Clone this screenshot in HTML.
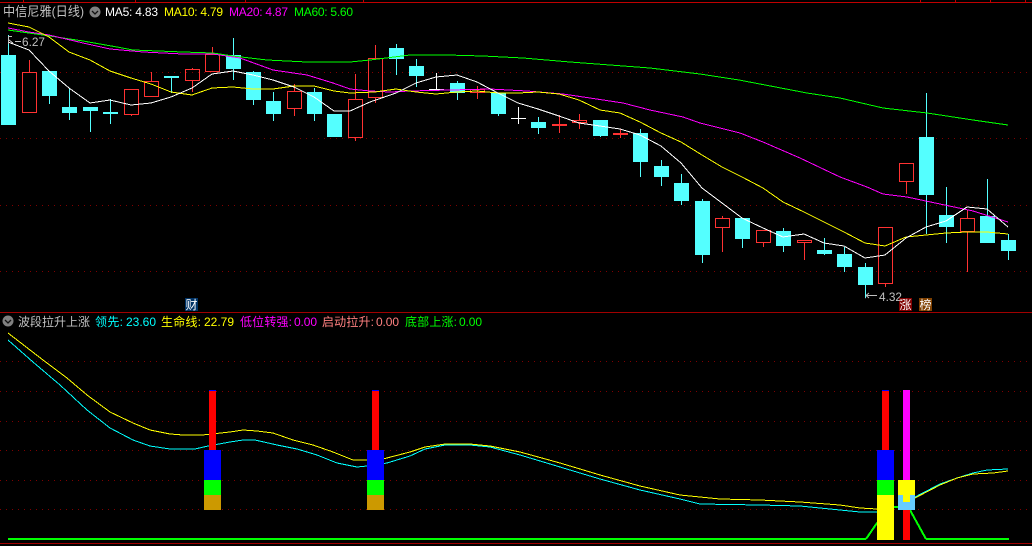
<!DOCTYPE html>
<html><head><meta charset="utf-8"><style>
html,body{margin:0;padding:0;background:#000;width:1032px;height:546px;overflow:hidden}
svg{display:block}
text{font-family:"Liberation Sans","Noto Sans CJK SC",sans-serif;font-size:12px}
</style></head><body>
<svg width="1032" height="546" viewBox="0 0 1032 546" xmlns="http://www.w3.org/2000/svg">
<rect width="1032" height="546" fill="#000"/>
<g shape-rendering="crispEdges">
<path d="M0 2.5H1032M23.5 0V2M135.5 0V2M245.5 0V2M363.5 0V2M920.5 0V2M955.5 0V2M990.5 0V2M1025.5 0V2" stroke="#c00000" fill="none"/>
<path d="M0 312.5H1032M0 543.5H1032" stroke="#a00000" fill="none"/>
<path d="M0 72.5H1032M0 138.5H1032M0 205.5H1032M0 271.5H1032M0 361.5H1032M0 391.5H1032M0 421.5H1032M0 450.5H1032M0 480.5H1032M0 509.5H1032" stroke="#800000" stroke-dasharray="1 5" fill="none"/>
<!-- cyan wicks -->
<path stroke="#54ffff" fill="none" d="M8.5 35V55M49.5 96V104M69.5 88V120M90.5 107V132M110.5 99V124M171.5 77V93M233.500 38V80M253.5 71V105M273.5 92V121M314.5 88V121M396.5 44V75M416.5 59V87M457.5 81V100M498.5 114V116M538.5 117V134M600.5 136V137M640.5 129V177M661.5 160V186M681.5 174V205M702.5 199V263M742.5 239V248M783.5 228V252M824.5 238V255M844.5 247V272M865.5 263V298M926.5 93V234M946.5 187V243M987.5 179V216M1008.5 234V260"/>
<!-- cyan bodies -->
<path fill="#54ffff" d="M1 55h15v70H1zM42 71h15v25H42zM62 107h15v6H62zM83 107h15v4H83zM103 112h15v2H103zM164 76h15v2H164zM226 55h15v14H226zM246 72h15v28H246zM266 101h15v13H266zM307 92h15v22H307zM327 114h15v23H327zM389 48h15v11H389zM409 66h15v10H409zM450 83h15v10H450zM491 93h15v21H491zM531 122h15v6H531zM593 120h15v16H593zM633 133h15v29H633zM654 166h15v11H654zM674 183h15v18H674zM695 201h15v54H695zM735 218h15v21H735zM776 231h15v15H776zM817 250h15v4H817zM837 254h15v13H837zM858 267h15v18H858zM919 137h15v58H919zM939 215h15v12H939zM980 216h15v27H980zM1001 240h15v11H1001z"/>
<!-- red candles -->
<path stroke="#ff3232" fill="none" d="M29.5 60V72M131.5 115V116M151.5 72V81M192.5 68V69M192.5 81V92M212.5 47V54M294.5 84V91M294.5 109V116M355.5 74V99M355.5 138V141M375.5 45V58M375.5 98V103M477.5 86V99M579.5 114V120M579.5 122V129M722.5 216V218M722.5 228V252M763.5 243V247M804.5 243V260M885.5 284V287M906.5 182V194M967.5 210V218M967.5 232V272M559.5 115V133M620.5 129V138"/>
<path stroke="#ff3232" fill="none" d="M22.5 72.5h14v40h-14zM124.5 89.5h14v25h-14zM144.5 81.5h14v15h-14zM185.5 69.5h14v11h-14zM205.5 54.5h14v17h-14zM287.5 91.5h14v17h-14zM348.5 99.5h14v38h-14zM368.5 58.5h14v39h-14zM470.5 89.5h14v3h-14zM572.5 120.5h14v2h-14zM715.5 218.5h14v9h-14zM756.5 230.5h14v12h-14zM797.5 240.5h14v2h-14zM878.5 227.5h14v56h-14zM899.5 163.5h14v18h-14zM960.5 218.5h14v13h-14z"/>
<path fill="#ff3232" d="M552 124h15v2H552zM613 133h15v2H613z"/>
<!-- white crosses -->
<path stroke="#fff" fill="none" d="M436.5 73V91M429 89.5H444M518.5 107V124M511 118.5H526"/>
</g>
<!-- MA lines -->
<g fill="none" shape-rendering="crispEdges">
<polyline stroke="#00ff00" stroke-width="1" points="8,30 50,36 83,41 117,47 133,50 183,52 213,53 233,56 267,60 307,62 350,62 370,60 410,55 447,55 483,56 523,58 570,62 610,65 650,68 700,74 739,80 807,93 840,98 883,108 927,113 973,120 1008,125"/>
<polyline stroke="#ff00ff" stroke-width="1" points="8,28 29,32 49,35 83,43 110,49 143,52 183,54 213,54 240,58 273,70 307,75 333,83 350,89 370,91 390,92 410,91 450,90 490,89 527,91 563,94 590,98 623,103 650,110 683,117 700,123 740,133 763,142 800,158 840,177 867,187 883,194 907,197 940,204 973,211 1008,222"/>
<polyline stroke="#ffff00" stroke-width="1" points="8,23 29,27 49,37 69,52 90,60 110,71 131,78 151,84 171,92 192,95 212,88 233,87 253,89 273,89 294,86 314,86 334,91 350,93 375,92 396,89 416,92 436,94 457,92 477,91 498,93 518,93 538,92 559,94 579,100 600,110 620,113 640,122 661,133 681,142 702,155 722,167 742,177 763,188 783,202 804,212 824,222 844,232 865,243 885,246 906,237 926,235 946,233 967,232 987,232 1008,234"/>
<polyline stroke="#ffffff" stroke-width="1" points="8,42 29,50 49,71 69,88 90,103 110,100 131,105 151,103 171,97 192,88 212,74 233,71 253,75 273,80 294,87 314,97 334,111 350,111 370,102 396,93 416,83 436,77 457,75 477,82 498,93 518,103 538,109 559,116 579,123 600,126 620,129 640,135 661,146 681,163 702,188 722,203 742,218 763,228 783,237 804,234 824,243 844,246 865,258 885,255 906,238 926,227 946,221 967,207 987,209 1008,227"/>
<!-- lower lines -->
<polyline stroke="#ffff00" stroke-width="1" points="8,333 43,360 67,378 87,395 110,412 133,423 150,430 170,434 183,435 202,435 230,432 243,430 257,431 273,433 293,440 313,445 333,452 353,460 367,460 383,459 410,452 425,447 445,444 470,444 490,446 520,452 560,463 600,475 640,486 680,495 720,499 760,500 800,502 840,505 860,508 877,509"/>
<polyline stroke="#00ffff" stroke-width="1" points="8,340 33,362 60,385 87,410 110,428 133,440 150,446 170,449 195,449 208,446 230,442 243,440 255,440 277,445 297,449 317,455 337,463 357,467 367,466 387,463 410,456 425,449 445,445 470,445 490,447 520,455 560,467 600,479 640,490 680,499 700,504 760,505 800,506 840,510 860,512 877,512"/>
<polyline stroke="#00ffff" stroke-width="1" points="915,497 940,484 957,478 973,473 987,470 1008,469"/>
<polyline stroke="#ffff00" stroke-width="1" points="915,498 940,485 957,478 973,474 993,473 1008,471"/>
<polyline stroke="#00ff00" stroke-width="2" points="866,539 877,523 894,507 898,507"/>
<polyline stroke="#00ff00" stroke-width="2" points="910,510 926,539"/>
</g>
<g shape-rendering="crispEdges">
<rect x="8" y="538" width="858" height="2" fill="#00ff00"/>
<rect x="926" y="538" width="83" height="2" fill="#00ff00"/>
<!-- bars -->
<rect x="209" y="390" width="7" height="60" fill="#ff0000"/><rect x="209" y="390" width="7" height="1" fill="#0000ff"/>
<rect x="204" y="450" width="17" height="30" fill="#0000ff"/><rect x="204" y="480" width="17" height="15" fill="#00ff00"/><rect x="204" y="495" width="17" height="15" fill="#cc9900"/>
<rect x="372" y="390" width="7" height="60" fill="#ff0000"/><rect x="372" y="390" width="7" height="1" fill="#0000ff"/>
<rect x="367" y="450" width="17" height="30" fill="#0000ff"/><rect x="367" y="480" width="17" height="15" fill="#00ff00"/><rect x="367" y="495" width="17" height="15" fill="#cc9900"/>
<rect x="882" y="390" width="7" height="60" fill="#ff0000"/><rect x="882" y="390" width="7" height="1" fill="#0000ff"/>
<rect x="877" y="450" width="17" height="30" fill="#0000ff"/><rect x="877" y="480" width="17" height="15" fill="#00ff00"/><rect x="877" y="495" width="17" height="45" fill="#ffff00"/>
<rect x="903" y="390" width="7" height="90" fill="#ff00ff"/>
<rect x="898" y="480" width="17" height="15" fill="#ffff00"/>
<rect x="898" y="495" width="17" height="15" fill="#66ccff"/>
<rect x="903" y="495" width="7" height="7" fill="#ffff00"/>
<rect x="903" y="510" width="7" height="30" fill="#ff0000"/>
<!-- badges -->
<rect x="185" y="298" width="13" height="13" fill="#003366"/>
<rect x="899" y="298" width="13" height="13" fill="#800000"/>
<rect x="919" y="298" width="13" height="13" fill="#7f4000"/>
</g>
<!-- annotations -->
<g fill="none" stroke="#c0c0c0">
<path d="M8.5 36V44M9 36.5H12M9 40L13 43M15 41.5H21" shape-rendering="crispEdges"/>
<path d="M865.5 298H866M866 295.5H877M866 295.5L869 293M866 295.5L869 298" />
</g>
<text x="22" y="46" fill="#c0c0c0" textLength="23" lengthAdjust="spacingAndGlyphs">6.27</text>
<text x="879" y="301" fill="#c0c0c0" textLength="23" lengthAdjust="spacingAndGlyphs">4.32</text>
<text x="185.500" y="309" fill="#fff" style="font-size:12px">财</text>
<text x="899.500" y="309" fill="#fff" style="font-size:12px">涨</text>
<text x="919.500" y="309" fill="#fff" style="font-size:12px">榜</text>
<!-- header -->
<text x="3" y="16" fill="#c0c0c0" textLength="81" lengthAdjust="spacingAndGlyphs" style="font-size:13px">中信尼雅(日线)</text>
<circle cx="95" cy="12" r="5.500" fill="#808080"/>
<path d="M92 11L95 14L98 11" fill="none" stroke="#111" stroke-width="1.300"/>
<text x="105" y="16" fill="#fff" textLength="53" lengthAdjust="spacing">MA5: 4.83</text>
<text x="164" y="16" fill="#ffff00" textLength="59" lengthAdjust="spacing">MA10: 4.79</text>
<text x="229" y="16" fill="#ff00ff" textLength="59" lengthAdjust="spacing">MA20: 4.87</text>
<text x="294" y="16" fill="#00ff00" textLength="59" lengthAdjust="spacing">MA60: 5.60</text>
<circle cx="8" cy="321" r="5.500" fill="#808080"/>
<path d="M5 320L8 323L11 320" fill="none" stroke="#111" stroke-width="1.300"/>
<text x="18" y="326" fill="#c0c0c0" textLength="72" lengthAdjust="spacing">波段拉升上涨</text>
<text x="95" y="326" fill="#00ffff" textLength="28" lengthAdjust="spacing">领先:</text>
<text x="126" y="326" fill="#00ffff" textLength="30" lengthAdjust="spacing">23.60</text>
<text x="161" y="326" fill="#ffff00" textLength="40" lengthAdjust="spacing">生命线:</text>
<text x="204" y="326" fill="#ffff00" textLength="30" lengthAdjust="spacing">22.79</text>
<text x="240" y="326" fill="#ff00ff" textLength="52" lengthAdjust="spacing">低位转强:</text>
<text x="294" y="326" fill="#ff00ff" textLength="23" lengthAdjust="spacing">0.00</text>
<text x="322" y="326" fill="#ff8080" textLength="52" lengthAdjust="spacing">启动拉升:</text>
<text x="376" y="326" fill="#ff8080" textLength="23" lengthAdjust="spacing">0.00</text>
<text x="405" y="326" fill="#00ff00" textLength="52" lengthAdjust="spacing">底部上涨:</text>
<text x="459" y="326" fill="#00ff00" textLength="23" lengthAdjust="spacing">0.00</text>
</svg>
</body></html>
